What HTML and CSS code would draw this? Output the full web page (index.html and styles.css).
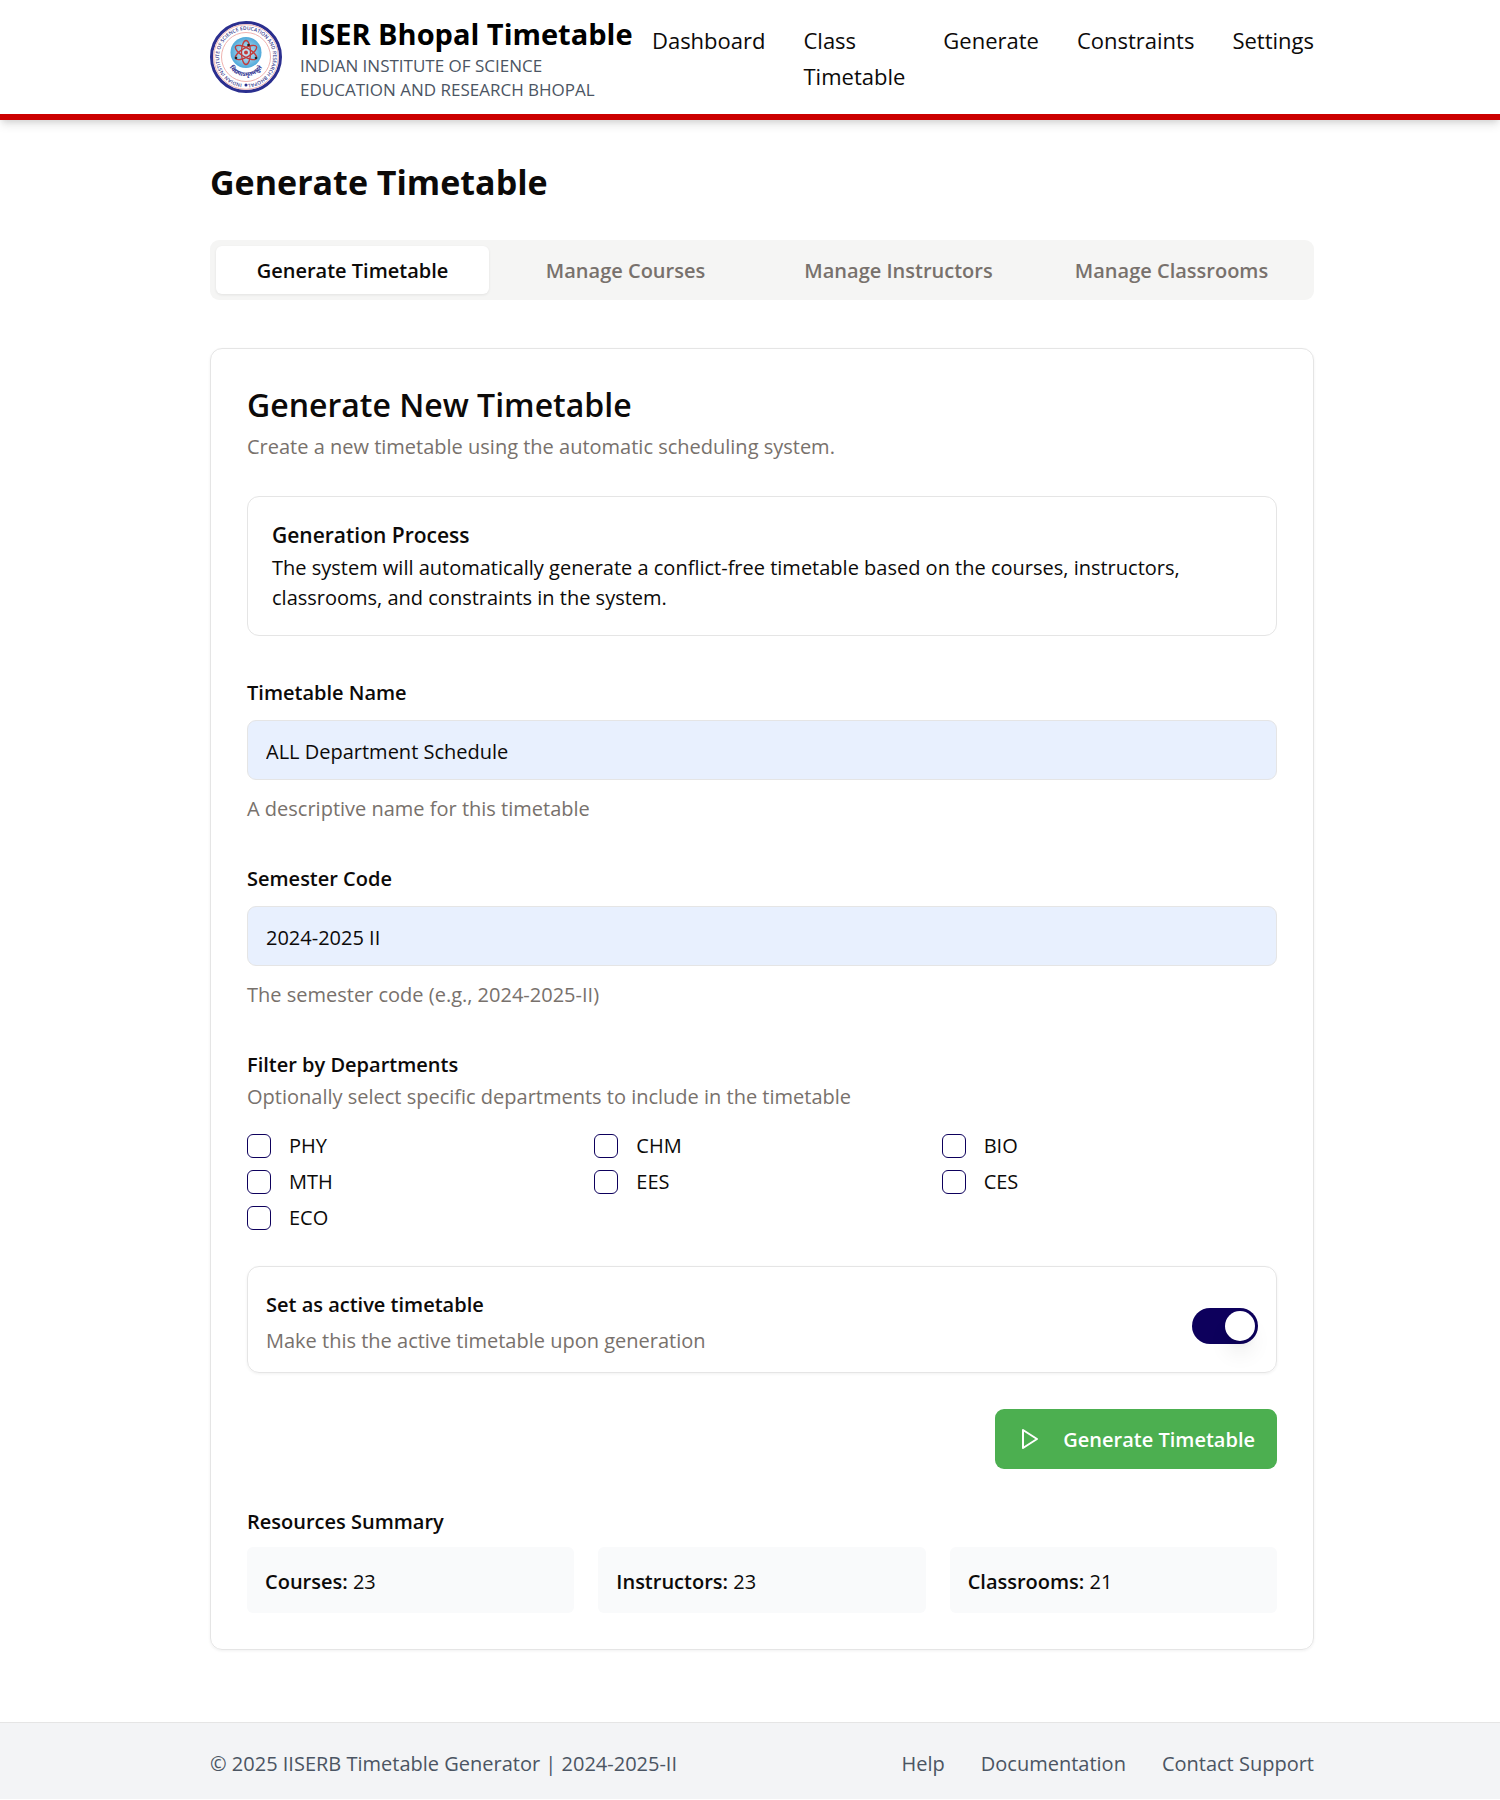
FILE: index.html
```html
<!DOCTYPE html>
<html lang="en">
<head>
<meta charset="utf-8">
<meta name="viewport" content="width=device-width, initial-scale=1">
<title>IISER Bhopal Timetable</title>
<link rel="stylesheet" href="styles.css">
</head>
<body>
<header class="site-header">
  <div class="container header-row">
    <div class="brand">
      <svg class="logo" viewBox="0 0 72 72" role="img" aria-label="IISER Bhopal">
        <defs>
          <path id="ring" d="M36 63 A27 27 0 1 1 36.1 63"/>
          <path id="motto" d="M18 43 A19.3 19.3 0 0 0 54 43"/>
          <radialGradient id="globe"><stop offset="0" stop-color="#d8edf7"/><stop offset="1" stop-color="#4fa9da"/></radialGradient>
        </defs>
        <circle cx="36" cy="36" r="34.5" fill="#fff" stroke="#2b2f8f" stroke-width="3"/>
        <circle cx="36" cy="36" r="32.3" fill="none" stroke="#efb3b0" stroke-width="1"/>
        <circle cx="36" cy="36" r="24.5" fill="none" stroke="#efb3b0" stroke-width="1"/>
        <text class="ring-text"><textPath href="#ring" startOffset="4">INDIAN INSTITUTE OF SCIENCE EDUCATION AND RESEARCH BHOPAL</textPath></text>
        <circle cx="36" cy="64" r="1.5" fill="#2b2f8f"/>
        <circle cx="36" cy="31.500" r="15.500" fill="url(#globe)"/>
        <g fill="none" stroke="#c23b3b" stroke-width="1.300">
          <ellipse cx="36" cy="31.500" rx="4.500" ry="12"/>
          <ellipse cx="36" cy="31.500" rx="4.500" ry="12" transform="rotate(60 36 31.500)"/>
          <ellipse cx="36" cy="31.500" rx="4.500" ry="12" transform="rotate(120 36 31.500)"/>
        </g>
        <g fill="#222"><circle cx="38.500" cy="24" r="1.300"/><circle cx="26" cy="37" r="1.300"/><circle cx="46" cy="37" r="1.300"/></g>
        <circle cx="36" cy="31.500" r="2" fill="#c23b3b"/>
        <text class="motto-text"><textPath href="#motto" startOffset="50%" text-anchor="middle">विद्ययाऽमृतमश्नुते</textPath></text>
      </svg>
      <div class="brand-text">
        <div class="brand-name">IISER Bhopal Timetable</div>
        <div class="brand-sub">INDIAN INSTITUTE OF SCIENCE EDUCATION AND RESEARCH BHOPAL</div>
      </div>
    </div>
    <nav class="main-nav">
      <a href="#">Dashboard</a>
      <a href="#">Class Timetable</a>
      <a href="#">Generate</a>
      <a href="#">Constraints</a>
      <a href="#">Settings</a>
    </nav>
  </div>
</header>

<main class="container main">
  <h1 class="page-title">Generate Timetable</h1>
  <div class="tabs" role="tablist">
    <button class="tab tab-active" role="tab" aria-selected="true">Generate Timetable</button>
    <button class="tab" role="tab" aria-selected="false">Manage Courses</button>
    <button class="tab" role="tab" aria-selected="false">Manage Instructors</button>
    <button class="tab" role="tab" aria-selected="false">Manage Classrooms</button>
  </div>

  <section class="card">
    <h2 class="card-title">Generate New Timetable</h2>
    <p class="hint">Create a new timetable using the automatic scheduling system.</p>

    <div class="notice">
      <h3 class="notice-title">Generation Process</h3>
      <p class="notice-text">The system will automatically generate a conflict-free timetable based on the courses, instructors, classrooms, and constraints in the system.</p>
    </div>

    <form class="form">
      <div class="field">
        <label class="label" for="name">Timetable Name</label>
        <input class="input" id="name" type="text" value="ALL Department Schedule">
        <p class="hint">A descriptive name for this timetable</p>
      </div>
      <div class="field">
        <label class="label" for="semester">Semester Code</label>
        <input class="input" id="semester" type="text" value="2024-2025 II">
        <p class="hint">The semester code (e.g., 2024-2025-II)</p>
      </div>
      <fieldset class="departments">
        <legend class="label">Filter by Departments</legend>
        <p class="hint">Optionally select specific departments to include in the timetable</p>
        <div class="checks">
          <label class="check"><input type="checkbox">PHY</label>
          <label class="check"><input type="checkbox">CHM</label>
          <label class="check"><input type="checkbox">BIO</label>
          <label class="check"><input type="checkbox">MTH</label>
          <label class="check"><input type="checkbox">EES</label>
          <label class="check"><input type="checkbox">CES</label>
          <label class="check"><input type="checkbox">ECO</label>
        </div>
      </fieldset>
      <div class="active-row">
        <div>
          <label class="active-label" for="active">Set as active timetable</label>
          <p class="hint">Make this the active timetable upon generation</p>
        </div>
        <input class="switch" id="active" type="checkbox" role="switch" checked>
      </div>
      <button class="submit" type="button">
        <svg class="play" viewBox="0 0 24 24" aria-hidden="true"><polygon points="6 3 20 12 6 21" fill="none" stroke="currentColor" stroke-width="2" stroke-linejoin="round"/></svg>
        <span class="submit-text">Generate Timetable</span>
      </button>
    </form>

    <h3 class="summary-title">Resources Summary</h3>
    <div class="summary">
      <div class="stat"><strong>Courses:</strong> 23</div>
      <div class="stat"><strong>Instructors:</strong> 23</div>
      <div class="stat"><strong>Classrooms:</strong> 21</div>
    </div>
  </section>
</main>

<footer class="site-footer">
  <div class="container footer-row">
    <span>© 2025 IISERB Timetable Generator | 2024-2025-II</span>
    <nav class="footer-nav">
      <a href="#">Help</a>
      <a href="#">Documentation</a>
      <a href="#">Contact Support</a>
    </nav>
  </div>
</footer>
</body>
</html>
```
FILE: styles.css
```css
*, *::before, *::after { box-sizing: border-box; }

body {
  margin: 0;
  background: #fff;
  color: #0c0a09;
  font: 400 20px/30px "Open Sans", "Noto Sans", sans-serif;
}

h1, h2, h3, p { margin: 0; }
a { color: inherit; text-decoration: none; }
button, input { font: inherit; color: inherit; }

.site-header, .site-footer, .main { padding-left: 24px; }
.container { max-width: 1104px; margin: 0 auto; }

/* Header */
.site-header {
  padding-top: 12px;
  padding-bottom: 12px;
  border-bottom: 6px solid #c00;
  background: #fff;
  box-shadow: 0 6px 9px -1px rgba(0, 0, 0, 0.1), 0 3px 6px -2px rgba(0, 0, 0, 0.1);
}
.header-row, .brand, .main-nav, .footer-row, .footer-nav { display: flex; }
.header-row { align-items: center; justify-content: space-between; gap: 16px; }
.brand { align-items: center; gap: 18px; }
.logo { flex: none; width: 72px; height: 72px; }
.ring-text { font: 600 5px "Open Sans", sans-serif; fill: #3a3d8f; }
.motto-text { font: 700 6px "Noto Sans", sans-serif; fill: #2b2f8f; }
.brand-text { max-width: 332px; color: #000; }
.brand-name { padding-top: 2px; font-size: 29px; line-height: 40px; font-weight: 700; white-space: nowrap; }
.brand-sub { font-size: 17px; line-height: 24px; color: #4b5563; }
.main-nav { gap: 38px; padding-top: 2px; font-size: 22px; line-height: 36px; }
.main-nav a:nth-child(2) { width: min-content; }

/* Page heading and tabs */
.main { max-width: 1128px; padding-top: 38px; padding-bottom: 72px; }
.page-title { font-size: 34px; line-height: 48px; font-weight: 700; }
.tabs {
  display: grid;
  grid-template-columns: repeat(4, 1fr);
  margin-top: 34px;
  padding: 6px;
  border-radius: 9px;
  background: #f5f5f4;
}
.tab {
  height: 48px;
  padding: 2px 0 0;
  border: 0;
  border-radius: 6px;
  background: transparent;
  color: #78716c;
  font-weight: 600;
}
.tab-active { background: #fff; color: #0c0a09; box-shadow: 0 1px 3px rgba(0, 0, 0, 0.08); }

/* Card */
.card {
  margin-top: 48px;
  padding: 38px 36px 36px;
  border: 1px solid #e5e5e5;
  border-radius: 12px;
  box-shadow: 0 1px 3px rgba(0, 0, 0, 0.06);
}
.card-title { margin-bottom: 9px; font-size: 32px; line-height: 36px; font-weight: 600; }
.hint { color: #78716c; }
.notice { margin-top: 34px; padding: 26px 24px 22px; border: 1px solid #e5e5e5; border-radius: 12px; }
.notice-title { margin-bottom: 6px; font-size: 21px; line-height: 24px; font-weight: 600; }

/* Form */
.form { display: flex; flex-direction: column; margin-top: 48px; }
.field { display: flex; flex-direction: column; margin-bottom: 46px; }
.label { line-height: 18px; font-weight: 600; }
.input {
  height: 60px;
  margin: 18px 0 14px;
  padding: 2px 18px 0;
  border: 1px solid #e5e5e5;
  border-radius: 9px;
  background: #e8f0fe;
}
.departments { min-width: 0; margin: 0; padding: 0; border: 0; }
.departments .label { margin-bottom: 8px; padding: 0; }
.checks {
  display: grid;
  grid-template-columns: repeat(3, 1fr);
  gap: 12px;
  margin-top: 22px;
}
.check { display: flex; align-items: center; gap: 18px; line-height: 24px; }
.check input {
  appearance: none;
  width: 24px;
  height: 24px;
  margin: 0;
  border: 1px solid #0d005c;
  border-radius: 6px;
}
.active-row {
  display: flex;
  align-items: flex-end;
  justify-content: space-between;
  margin-top: 36px;
  padding: 20px 18px 16px;
  border: 1px solid #e5e5e5;
  border-radius: 12px;
  box-shadow: 0 1px 3px rgba(0, 0, 0, 0.06);
}
.active-label { display: block; margin-bottom: 3px; line-height: 36px; font-weight: 600; }
.switch {
  appearance: none;
  display: flex;
  justify-content: flex-end;
  width: 66px;
  height: 36px;
  margin: 0 0 12px;
  padding: 3px;
  border-radius: 18px;
  background: #0d005c;
}
.switch::before {
  content: "";
  width: 30px;
  height: 30px;
  border-radius: 50%;
  background: #fff;
  box-shadow: 0 15px 22px -4px rgba(0, 0, 0, 0.1), 0 6px 9px -4px rgba(0, 0, 0, 0.1);
}
.submit {
  display: flex;
  align-items: center;
  align-self: flex-end;
  gap: 22px;
  height: 60px;
  margin-top: 36px;
  padding: 0 22px;
  border: 0;
  border-radius: 9px;
  background: #4caf50;
  color: #fff;
  font-weight: 600;
}
.submit-text { padding-top: 2px; }
.play { width: 24px; height: 24px; }

/* Summary */
.summary-title { margin: 38px 0 10px; font-size: 20px; line-height: 30px; font-weight: 600; }
.summary { display: grid; grid-template-columns: repeat(3, 1fr); gap: 24px; }
.stat { padding: 20px 18px 16px; border-radius: 6px; background: #f9fafb; }
.stat strong { font-weight: 600; }

/* Footer */
.site-footer {
  padding-top: 26px;
  padding-bottom: 20px;
  border-top: 1px solid #e5e5e5;
  background: #f3f4f6;
  color: #4b5563;
}
.footer-row { justify-content: space-between; }
.footer-nav { gap: 36px; }
```
